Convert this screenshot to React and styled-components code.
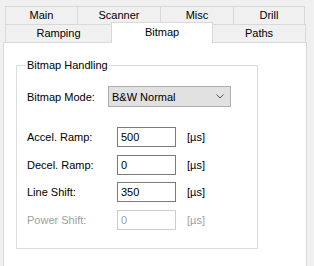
import React from "react";
import styled, { createGlobalStyle } from "styled-components";

const Global = createGlobalStyle`
  html, body { margin: 0; padding: 0; background: #f0f0f0; }
  body { font-family: "Liberation Sans", Arial, sans-serif; font-size: 11px; color: #000; }
  * { box-sizing: border-box; }
`;

const Page = styled.div`
  width: 314px;
  height: 266px;
  overflow: hidden;
  padding: 6px 0 0 3px;
`;

const TabRow = styled.div`
  display: flex;
  align-items: flex-start;
  margin-left: 2px;
  margin-top: ${(p) => (p.$first ? 0 : -1)}px;
`;

const Tab = styled.div`
  position: relative;
  width: ${(p) => p.$w}px;
  height: ${(p) => (p.$active ? 21 : 19)}px;
  margin-left: ${(p) => (p.$first ? 0 : -1)}px;
  margin-top: ${(p) => (p.$active ? -2 : 0)}px;
  border: 1px solid #d9d9d9;
  border-bottom: ${(p) => (p.$active ? "none" : "1px solid #d9d9d9")};
  background: ${(p) => (p.$active ? "#fff" : "#f0f0f0")};
  z-index: ${(p) => (p.$active ? 2 : 0)};
  display: flex;
  justify-content: center;
  align-items: ${(p) => (p.$active ? "flex-start" : "center")};
  padding-top: ${(p) => (p.$active ? 3 : 0)}px;
  line-height: 13px;
`;

const Panel = styled.div`
  position: relative;
  z-index: 1;
  margin-top: -1px;
  width: 304px;
  height: 240px;
  background: #fff;
  border: 1px solid #d9d9d9;
  padding: 16px 0 0 12px;
`;

const Group = styled.fieldset`
  margin: 0;
  width: 242px;
  height: 190px;
  border: 1px solid #dcdcdc;
  padding: 0 0 0 10px;
  display: flex;
  flex-direction: column;
`;

const Legend = styled.legend`
  margin-left: -1px;
  padding: 0 1px;
  line-height: 13px;
`;

const ModeRow = styled.div`
  display: flex;
  align-items: center;
  margin-top: 14px;
  height: 21px;
  margin-bottom: 20px;
`;

const ModeLabel = styled.span`
  width: 81px;
`;

const Select = styled.div`
  width: 123px;
  height: 21px;
  background: #e1e1e1;
  border: 1px solid #adadad;
  display: flex;
  align-items: center;
  justify-content: space-between;
  padding: 0 6px 0 3px;
`;

const Chevron = styled.svg`
  display: block;
`;

const FieldRow = styled.div`
  display: flex;
  align-items: center;
  height: 20px;
  margin-bottom: ${(p) => p.$mb}px;
  color: ${(p) => (p.$disabled ? "#a0a0a0" : "#000")};
`;

const Label = styled.span`
  width: 90px;
`;

const Input = styled.div`
  width: 59px;
  height: 20px;
  border: 1px solid ${(p) => (p.$disabled ? "#cccccc" : "#7a7a7a")};
  background: #fff;
  padding-left: 3px;
  display: flex;
  align-items: center;
`;

const Unit = styled.span`
  margin-left: 11px;
`;

const tabsTop = [
  { label: "Main", w: 73 },
  { label: "Scanner", w: 84 },
  { label: "Misc", w: 74 },
  { label: "Drill", w: 72 },
];
const tabsBottom = [
  { label: "Ramping", w: 107 },
  { label: "Bitmap", w: 102, active: true },
  { label: "Paths", w: 94 },
];

const fields = [
  { label: "Accel. Ramp:", value: "500", mb: 8 },
  { label: "Decel. Ramp:", value: "0", mb: 7 },
  { label: "Line Shift:", value: "350", mb: 8 },
  { label: "Power Shift:", value: "0", mb: 0, disabled: true },
];

export default function App() {
  return (
    <>
      <Global />
      <Page>
        <TabRow $first>
          {tabsTop.map((t, i) => (
            <Tab key={t.label} $w={t.w} $first={i === 0}>
              {t.label}
            </Tab>
          ))}
        </TabRow>
        <TabRow>
          {tabsBottom.map((t, i) => (
            <Tab key={t.label} $w={t.w} $first={i === 0} $active={t.active}>
              {t.label}
            </Tab>
          ))}
        </TabRow>
        <Panel>
          <Group>
            <Legend>Bitmap Handling</Legend>
            <ModeRow>
              <ModeLabel>Bitmap Mode:</ModeLabel>
              <Select>
                <span>B&amp;W Normal</span>
                <Chevron width="8" height="5" viewBox="0 0 8 5">
                  <path d="M0.5 0.5 L4 4 L7.5 0.5" fill="none" stroke="#555" strokeWidth="1" />
                </Chevron>
              </Select>
            </ModeRow>
            {fields.map((f) => (
              <FieldRow key={f.label} $mb={f.mb} $disabled={f.disabled}>
                <Label>{f.label}</Label>
                <Input $disabled={f.disabled}>{f.value}</Input>
                <Unit>[µs]</Unit>
              </FieldRow>
            ))}
          </Group>
        </Panel>
      </Page>
    </>
  );
}
